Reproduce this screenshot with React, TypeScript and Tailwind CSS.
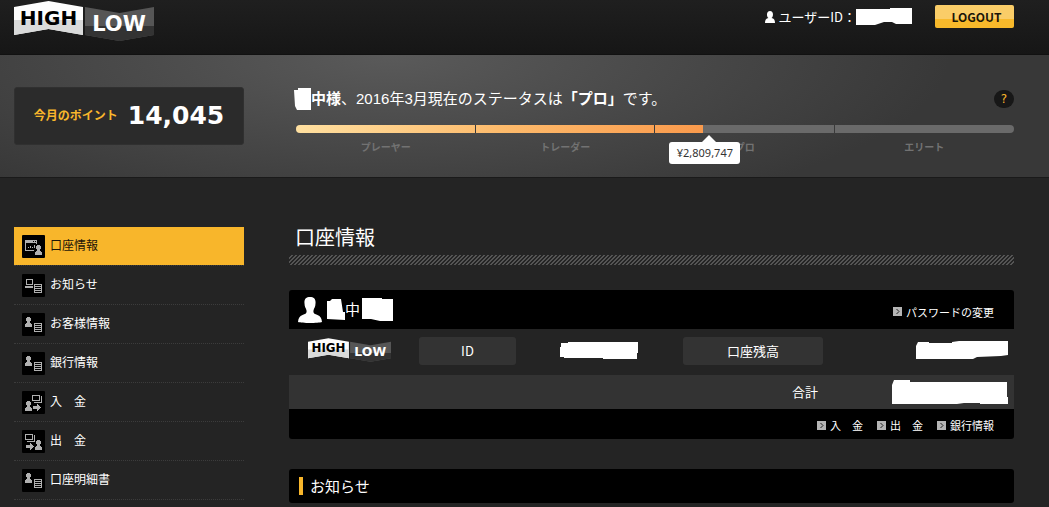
import type { ReactNode } from "react";

type IconName = "account" | "news" | "profile" | "deposit" | "withdraw";

const menu: { label: string; icon: IconName; active?: boolean }[] = [
  { label: "口座情報", icon: "account", active: true },
  { label: "お知らせ", icon: "news" },
  { label: "お客様情報", icon: "profile" },
  { label: "銀行情報", icon: "profile" },
  { label: "入　金", icon: "deposit" },
  { label: "出　金", icon: "withdraw" },
  { label: "口座明細書", icon: "profile" },
];

const levels = ["プレーヤー", "トレーダー", "プロ", "エリート"];

const Logo = ({ className }: { className: string }) => (
  <svg viewBox="0 0 140 40" className={className} role="img" aria-label="HIGH LOW">
    <path d="M0 6 L34.5 0 L69 6 V34 L34.5 28 L0 34Z" fill="#fdfdfd" />
    <path d="M0 19 H69 V34 L34.5 28 L0 34Z" fill="#d9dada" />
    <path d="M71 6 L105.500 12 L140 6 V34 L105.500 40 L71 34Z" fill="#565656" />
    <path d="M71 25 H140 V34 L105.500 40 L71 34Z" fill="#333" />
    <text x="34.500" y="24" textAnchor="middle" fontFamily="DejaVu Sans" fontWeight="700" fontSize="20" fill="#000">
      HIGH
    </text>
    <text x="105" y="30" textAnchor="middle" fontFamily="DejaVu Sans" fontWeight="700" fontSize="21" fill="#fff">
      LOW
    </text>
  </svg>
);

const Person = ({ x, y }: { x: number; y: number }) => (
  <path
    transform={`translate(${x} ${y})`}
    d="M2 0h3v1h1v3h-1v2h1v1h1v3h-7v-3h1v-1h1v-2h-1v-3h1z"
  />
);

const Sheet = () => (
  <path d="M12 10h8v9h-8zM13 11v1h6v-1zM13 13v1h6v-1zM13 15v1h6v-1zM13 17v1h6v-1z" fillRule="evenodd" />
);

const MenuIcon = ({ name }: { name: IconName }) => (
  <svg
    viewBox="0 0 23 23"
    className="h-[23px] w-[23px] shrink-0 rounded-[1px] bg-black"
    fill="#b0b0b0"
    shapeRendering="crispEdges"
    aria-hidden="true"
  >
    {name === "account" && (
      <>
        <path d="M3 5h12v4h-1V8H4v7h8v1H3zM11 6v1h1V6zM13 6v1h1V6z" fillRule="evenodd" />
        <path d="M6 12h1v1H6zM8 11h1v2H8zM10 12h1v1h-1zM12 10h1v3h-1z" />
        <Person x={13} y={10} />
      </>
    )}
    {name === "news" && (
      <>
        <path d="M4 5h7v6H4zM5 6v4h5V6zM3 12h8v2H3z" fillRule="evenodd" />
        <Sheet />
      </>
    )}
    {name === "profile" && (
      <>
        <Person x={3} y={4} />
        <Sheet />
      </>
    )}
    {name === "deposit" && (
      <>
        <path d="M10 4h8v6h-8zM11 5v4h6V5zM19 5h1v7h-8v-1h7z" fillRule="evenodd" />
        <Person x={3} y={10} />
        <path d="M11 15h4v-2l4 3.500-4 3.500v-2h-4z" />
      </>
    )}
    {name === "withdraw" && (
      <>
        <path d="M3 4h8v6H3zM4 5v4h6V5zM12 5h1v7H5v-1h7z" fillRule="evenodd" />
        <Person x={13} y={10} />
        <path d="M4 15h4v-2l4 3.500-4 3.500v-2H4z" />
      </>
    )}
  </svg>
);

const ArrowLink = ({ children }: { children: ReactNode }) => (
  <a href="#" className="flex items-center gap-1 text-[11px] leading-4 text-white">
    <svg viewBox="0 0 9 9" className="h-[9px] w-[9px]" aria-hidden="true">
      <path d="M0 0h9v9H0z" fill="#b5b5b5" />
      <path d="M3.500 2l2.500 2.500L3.500 7" fill="none" stroke="#222" />
    </svg>
    {children}
  </a>
);

const Header = () => (
  <header className="border-b border-[#111] bg-linear-to-b from-[#1f1f1f] to-[#161616]">
    <div className="flex h-[54px] items-start justify-between pr-[35px] pl-[14px]">
      <a href="#" className="mt-px">
        <Logo className="h-10 w-[140px]" />
      </a>
      <div className="mt-[5px] flex items-center">
        <svg viewBox="0 0 10 12" className="mr-1 h-3 w-[10px]" fill="#fff" aria-hidden="true">
          <path d="M5 0c4 0 3.500 6 1.500 7C9 7.500 10 9 10 12H0c0-3 1-4.500 3.500-5C1.500 6 1 0 5 0z" />
        </svg>
        <span className="text-[13px] leading-5">ユーザーID：</span>
        <svg viewBox="0 0 56 17" className="h-[17px] w-14" fill="#fff" aria-hidden="true">
          <path d="M0 1H34V0H56V16H40L36 14H28L19 17H0z" />
        </svg>
        <button className="ml-[23px] h-[23px] w-[79px] rounded-[2px] bg-linear-to-b from-[#facd68] from-60% to-[#f8b92b] to-60% pl-1 text-[12px] leading-4 font-bold text-[#1c1508]">
          LOGOUT
        </button>
      </div>
    </div>
  </header>
);

const StatusBar = () => (
  <div className="relative">
    <div className="flex h-2 overflow-hidden rounded bg-[#6a6a6a]">
      <div className="w-[56.7%] bg-linear-to-r from-[#ffe0a0] via-[#fdbb6c] to-[#fa9a4c]"></div>
    </div>
    <div className="absolute inset-x-0 top-0 grid h-2 grid-cols-4 divide-x divide-[#3a3a3a]">
      {levels.map((level) => (
        <span key={level}></span>
      ))}
    </div>
    <div className="mt-[7px] grid grid-cols-4 text-center text-[10px] leading-4 font-bold text-[#727272]">
      {levels.map((level) => (
        <span key={level}>{level}</span>
      ))}
    </div>
    <div className="absolute top-[17px] left-[52%] w-[71px] rounded-[3px] bg-white text-center font-['Noto_Sans'] text-[11px] leading-[22px] text-[#333]">
      <svg viewBox="0 0 14 7" className="absolute -top-[7px] left-[33px] h-[7px] w-[14px]" fill="#fff" aria-hidden="true">
        <path d="M7 0l7 7H0z" />
      </svg>
      ¥2,809,747
    </div>
  </div>
);

const Banner = () => (
  <section className="flex h-[123px] items-start border-b border-[#1a1a1a] bg-[#383838] bg-[radial-gradient(ellipse_560px_170px_at_390px_0px,#5a5a5a,#383838)] pr-[35px] pl-[14px]">
    <div className="mt-8 flex h-[58px] w-[230px] shrink-0 items-center justify-center gap-[10px] rounded-[3px] border border-[#303030] bg-[#2b2b2b]">
      <span className="text-[12px] font-bold text-[#f8b62b]">今月のポイント</span>
      <span className="font-['DejaVu_Sans'] text-[25px] leading-8 font-bold">14,045</span>
    </div>
    <div className="mt-8 ml-[52px] min-w-0 grow">
      <div className="mb-[14px] flex items-center justify-between">
        <p className="flex items-center text-[15px] leading-6">
          <svg viewBox="0 0 17 22" className="-ml-0.5 h-[22px] w-[17px]" fill="#fff" aria-hidden="true">
            <path d="M0 2H4V0H17V22H3L1 18z" />
          </svg>
          <span>
            <b>中様</b>、2016年3月現在のステータスは<b>「プロ」</b>です。
          </span>
        </p>
        <button className="h-[18px] w-5 rounded-full bg-[#171717] font-['DejaVu_Sans'] text-[12px] leading-[18px] text-[#f8b62b]">
          ?
        </button>
      </div>
      <StatusBar />
    </div>
  </section>
);

const Sidebar = () => (
  <nav className="w-[230px] shrink-0">
    {menu.map(({ label, icon, active }) => (
      <a
        key={label}
        href="#"
        className={`flex h-[39px] items-center gap-[5px] border-b border-dotted border-[#3c3c3c] pl-2 text-[12px] ${
          active ? "bg-[#f8b62b] bg-clip-padding text-[#1c1508]" : "text-white"
        }`}
      >
        <MenuIcon name={icon} />
        <span className="pb-0.5 leading-4">{label}</span>
      </a>
    ))}
  </nav>
);

const AccountCard = () => (
  <section className="mt-[25px] overflow-hidden rounded-[3px]">
    <div className="flex h-[39px] items-center justify-between bg-black pr-5 pl-[9px]">
      <div className="flex items-center text-[15px]">
        <svg viewBox="0 0 24 26" className="mr-[5px] h-[26px] w-6" fill="#fff" aria-hidden="true">
          <path d="M12 0c4 0 6 2 5.500 6.500C17.500 10 16 11 15.500 13.500c-.5 3 1 3.500 4 4.500 3 1 4 3 4.500 7-4 1.300-20 1.300-24 0 .5-4 1.500-6 4.500-7 3-1 4.500-1.500 4-4.500C8 11 6.500 10 6.500 6.500 6 2 8 0 12 0z" />
        </svg>
        <svg viewBox="0 0 18 21" className="h-[21px] w-[18px]" fill="#fff" aria-hidden="true">
          <path d="M0 2H3L5 0H14L16 13H18V21L0 20z" />
        </svg>
        <span>中</span>
        <svg viewBox="0 0 31 23" className="ml-0.5 h-[23px] w-[31px]" fill="#fff" aria-hidden="true">
          <path d="M0 0H20V1H31V23H18L9 21H0z" />
        </svg>
      </div>
      <div className="pt-1">
        <ArrowLink>パスワードの変更</ArrowLink>
      </div>
    </div>
    <table className="w-full table-fixed text-[13px] leading-7">
      <tbody>
        <tr className="h-[46px]">
          <td className="w-[130px] pl-[19px]">
            <Logo className="mb-1 h-6 w-[83px]" />
          </td>
          <th scope="row" className="w-[97px] font-normal">
            <div className="mb-0.5 rounded-[3px] bg-[#333]">ID</div>
          </th>
          <td className="w-[167px] pl-11">
            <svg viewBox="0 0 78 17" className="mb-1 h-[17px] w-[78px]" fill="#fff" role="img" aria-label="ID">
              <path d="M1 1H8V0H78V11H77V17H43V16H4V15H0V5H1z" />
            </svg>
          </td>
          <th scope="row" className="w-[140px] font-normal">
            <div className="mb-0.5 rounded-[3px] bg-[#333]">口座残高</div>
          </th>
          <td className="pr-[6px]">
            <svg viewBox="0 0 92 18" className="mb-1 ml-auto h-[18px] w-[92px]" fill="#fff" role="img" aria-label="口座残高">
              <path d="M2 1H13V2H36V1L43 0H92V14L85 15L61 16L57 18H0V5z" />
            </svg>
          </td>
        </tr>
        <tr className="h-[34px] bg-[#333]">
          <th scope="row" colSpan={4} className="pr-[5px] text-right font-normal">
            合計
          </th>
          <td className="pr-[6px]">
            <svg viewBox="0 0 116 24" className="ml-auto h-6 w-[116px]" fill="#fff" role="img" aria-label="合計">
              <path d="M2 0H18V2H115V17H116V24H88V23H72L65 24H0V5z" />
            </svg>
          </td>
        </tr>
      </tbody>
    </table>
    <div className="flex h-[30px] items-center justify-end gap-[14px] bg-black pt-0.5 pr-5">
      <ArrowLink>入　金</ArrowLink>
      <ArrowLink>出　金</ArrowLink>
      <ArrowLink>銀行情報</ArrowLink>
    </div>
  </section>
);

const App = () => {
  return (
    <div className="min-h-screen bg-[#242424] font-['Liberation_Sans','Noto_Sans_CJK_JP',sans-serif] text-white">
      <div className="font-['Noto_Sans_CJK_JP',sans-serif]">
        <Header />
      </div>
      <Banner />
      <div className="flex gap-[45px] pt-[49px] pr-[35px] pl-[14px] font-['Noto_Sans_CJK_JP',sans-serif]">
        <Sidebar />
        <main className="min-w-0 grow">
          <h1 className="mb-2 pl-[6px] text-[20px] leading-5">口座情報</h1>
          <div className="h-[10px] bg-[linear-gradient(135deg,#242424_25%,#555_25%,#555_50%,#242424_50%,#242424_75%,#555_75%)] bg-[length:4px_4px]"></div>
          <AccountCard />
          <h2 className="mt-[30px] flex h-[34px] items-center gap-[7px] rounded-[3px] bg-black pl-[10px] text-[15px]">
            <span className="h-[18px] w-1 bg-[#f8b62b]"></span>
            お知らせ
          </h2>
        </main>
      </div>
    </div>
  );
};

export default App;
